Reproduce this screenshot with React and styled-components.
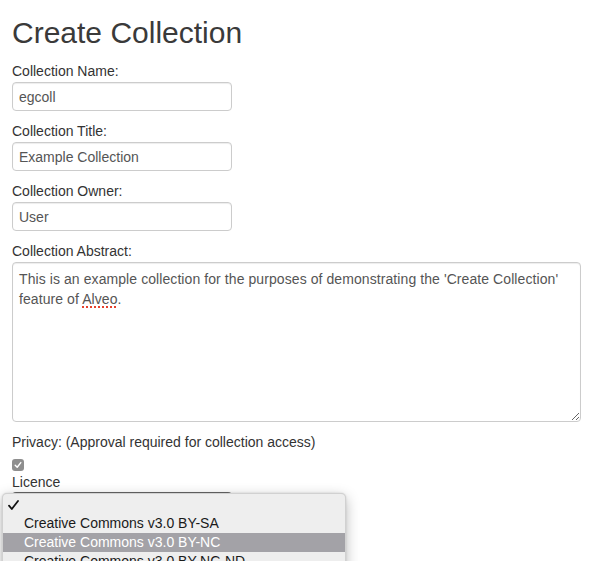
import React from "react";
import styled, { createGlobalStyle } from "styled-components";

const Global = createGlobalStyle`
  html, body {
    margin: 0;
    padding: 0;
    background: #fff;
    font-family: "Liberation Sans", Arial, Helvetica, sans-serif;
  }
  * { box-sizing: border-box; }
`;

const Page = styled.div`
  height: 561px;
  overflow: hidden;
  padding: 0 10px 0 12px;
`;

const Title = styled.h1`
  font-size: 30px;
  font-weight: 300;
  line-height: 33px;
  margin: 0 0 12px;
  padding-top: 16px;
  color: #3a3a3a;
`;

const Field = styled.div`
  margin-bottom: 10px;
`;

const Label = styled.label`
  display: block;
  font-size: 14px;
  line-height: 20px;
  color: #333;
  margin-bottom: ${(p) => (p.$tight ? 0 : 1)}px;
`;

const TextInput = styled.input`
  display: block;
  width: 220px;
  height: 29px;
  padding: 0 6px;
  border: 1px solid #ccc;
  border-radius: 4px;
  box-shadow: inset 0 1px 1px rgba(0, 0, 0, 0.075);
  font-family: inherit;
  font-size: 14px;
  color: #555;
  background: #fff;
  outline: none;
`;

const TextArea = styled.div`
  width: 100%;
  height: 160px;
  padding: 6px;
  border: 1px solid #ccc;
  border-radius: 4px;
  box-shadow: inset 0 1px 1px rgba(0, 0, 0, 0.075);
  font-size: 14px;
  line-height: 20px;
  letter-spacing: 0.08px;
  color: #555;
  overflow: auto;
  resize: vertical;
`;

const Misspelled = styled.span`
  text-decoration: underline dotted #e5412d;
  text-decoration-thickness: 2px;
  text-underline-offset: 2px;
`;

const CheckRow = styled.div`
  height: 20px;
  padding-top: 7px;
`;

const CheckBox = styled.span`
  display: flex;
  align-items: center;
  justify-content: center;
  width: 12px;
  height: 12px;
  border-radius: 3px;
  background: #8e8e8e;
`;

const SelectWrap = styled.div`
  position: relative;
`;

const SelectBox = styled.div`
  width: 220px;
  height: 20px;
  border-radius: 4px;
  border: 1px solid #9a9a9a;
  border-top-color: #6a6a6a;
  background: linear-gradient(#e4e4e4, #fafafa);
`;

const Popup = styled.div`
  position: absolute;
  left: -10px;
  top: 1px;
  width: 344px;
  padding-top: 1px;
  background: #eeeeee;
  border: 1px solid rgba(0, 0, 0, 0.12);
  border-radius: 5px;
  box-shadow: 0 4px 14px rgba(0, 0, 0, 0.28), 0 0 2px rgba(0, 0, 0, 0.15);
`;

const Option = styled.div`
  display: flex;
  align-items: center;
  height: 19px;
  font-size: 14px;
  line-height: 19px;
  color: ${(p) => (p.$active ? "#fff" : "#1a1a1a")};
  background: ${(p) => (p.$active ? "#a3a2a7" : "transparent")};
  white-space: nowrap;
`;

const Mark = styled.span`
  display: flex;
  align-items: center;
  width: 21px;
  padding-left: 5px;
  flex: none;
`;

const options = [
  { label: "", checked: true },
  { label: "Creative Commons v3.0 BY-SA" },
  { label: "Creative Commons v3.0 BY-NC", active: true },
  { label: "Creative Commons v3.0 BY-NC-ND" },
  { label: "Creative Commons v3.0 BY-NC-SA" },
];

export default function App() {
  return (
    <Page>
      <Global />
      <Title>Create Collection</Title>
      <Field>
        <Label>Collection Name:</Label>
        <TextInput defaultValue="egcoll" readOnly />
      </Field>
      <Field>
        <Label>Collection Title:</Label>
        <TextInput defaultValue="Example Collection" readOnly />
      </Field>
      <Field>
        <Label>Collection Owner:</Label>
        <TextInput defaultValue="User" readOnly />
      </Field>
      <Field>
        <Label>Collection Abstract:</Label>
        <TextArea>
          This is an example collection for the purposes of demonstrating the
          'Create Collection' feature of <Misspelled>Alveo</Misspelled>.
        </TextArea>
      </Field>
      <Label $tight>Privacy: (Approval required for collection access)</Label>
      <CheckRow>
        <CheckBox>
          <svg width="8" height="8" viewBox="0 0 8 8">
            <path d="M1.2 4.3 L3.2 6.3 L6.8 1.6" fill="none" stroke="#fff" strokeWidth="1.4" strokeLinecap="round" strokeLinejoin="round" />
          </svg>
        </CheckBox>
      </CheckRow>
      <Label $tight>Licence</Label>
      <SelectWrap>
        <SelectBox />
        <Popup>
          {options.map((o, i) => (
            <Option key={i} $active={o.active}>
              <Mark>
                {o.checked && (
                  <svg width="11" height="10" viewBox="0 0 11 10">
                    <path d="M1 5.6 L3.8 9 L10 1" fill="none" stroke="#111" strokeWidth="1.8" strokeLinecap="round" strokeLinejoin="round" />
                  </svg>
                )}
              </Mark>
              {o.label}
            </Option>
          ))}
        </Popup>
      </SelectWrap>
    </Page>
  );
}
